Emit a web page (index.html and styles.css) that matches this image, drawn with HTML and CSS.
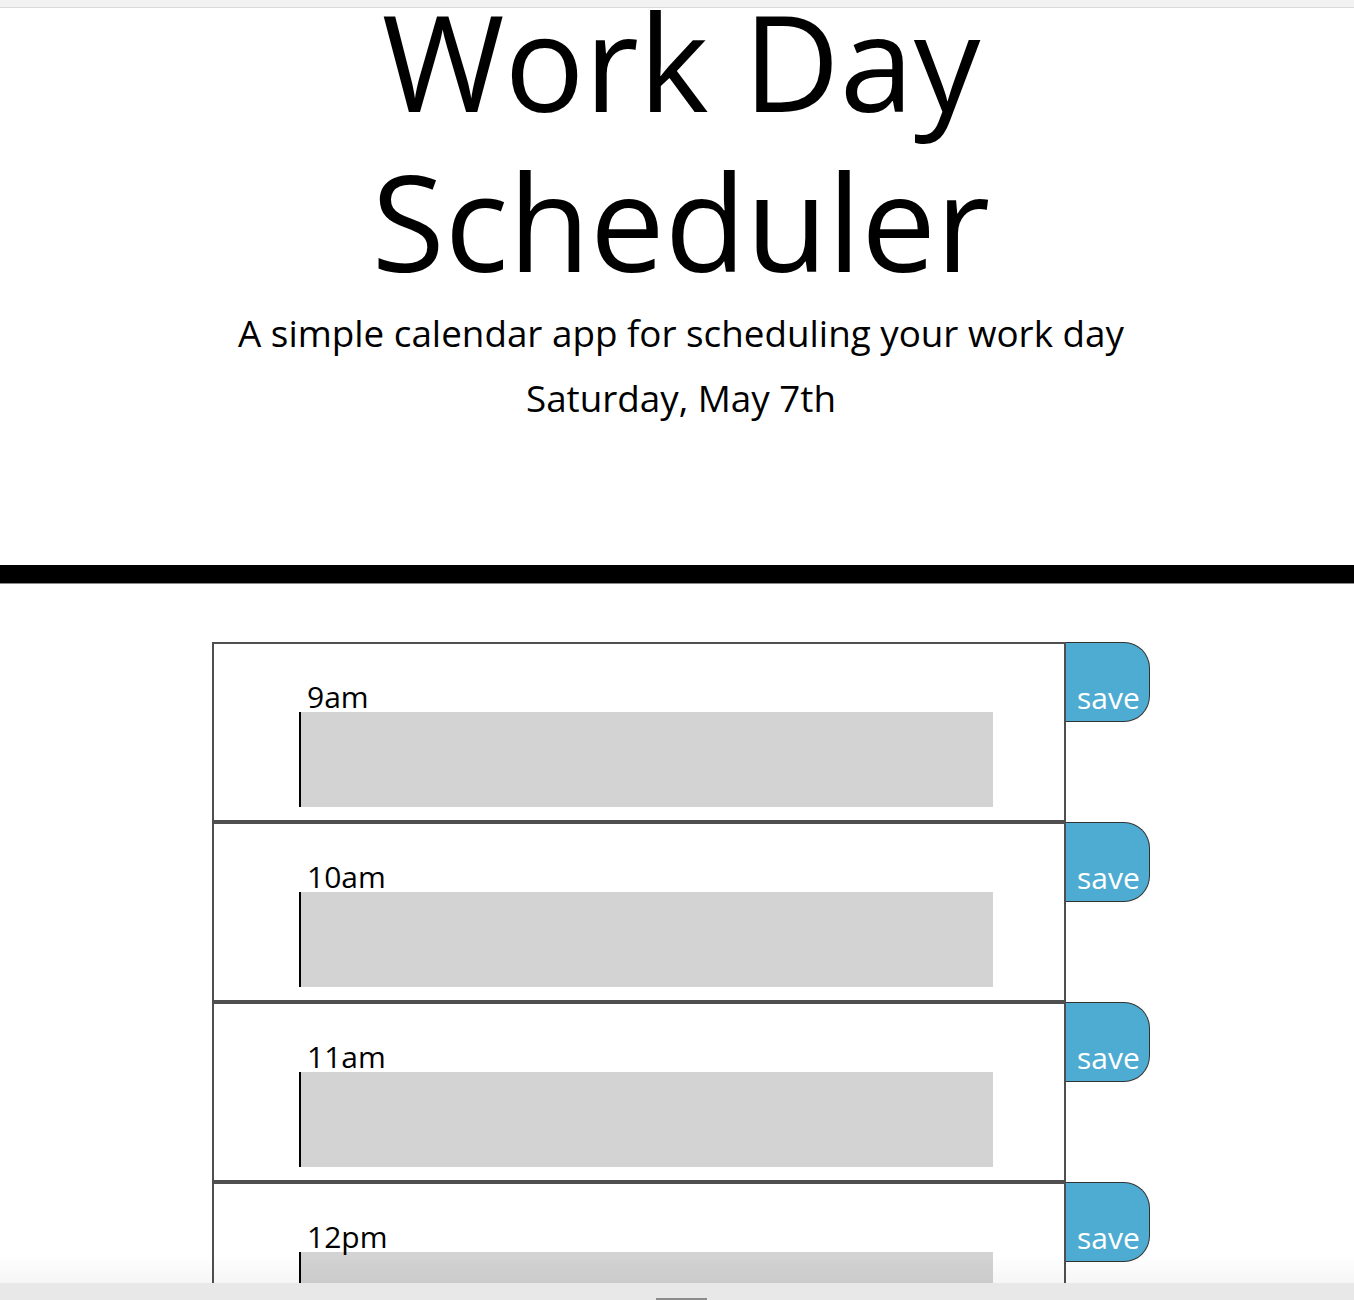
FILE: index.html
```html
<!DOCTYPE html>
<html lang="en">
<head>
<meta charset="utf-8">
<title>Work Day Scheduler</title>
<link rel="stylesheet" href="styles.css">
</head>
<body>
<div class="chrome-top"></div>
<header class="jumbotron">
  <h1 class="title">Work Day Scheduler</h1>
  <p class="lead">A simple calendar app for scheduling your work day</p>
  <p class="current-day">Saturday, May 7th</p>
</header>
<div class="planner-wrap">
  <main class="planner">
    <div class="time-row">
      <div class="hour-box">
        <div class="hour">9am</div>
        <textarea class="description"></textarea>
      </div>
      <button class="save-btn">save</button>
    </div>
    <div class="time-row">
      <div class="hour-box">
        <div class="hour">10am</div>
        <textarea class="description"></textarea>
      </div>
      <button class="save-btn">save</button>
    </div>
    <div class="time-row">
      <div class="hour-box">
        <div class="hour">11am</div>
        <textarea class="description"></textarea>
      </div>
      <button class="save-btn">save</button>
    </div>
    <div class="time-row">
      <div class="hour-box">
        <div class="hour">12pm</div>
        <textarea class="description"></textarea>
      </div>
      <button class="save-btn">save</button>
    </div>
    <div class="time-row">
      <div class="hour-box">
        <div class="hour">1pm</div>
        <textarea class="description"></textarea>
      </div>
      <button class="save-btn">save</button>
    </div>
    <div class="time-row">
      <div class="hour-box">
        <div class="hour">2pm</div>
        <textarea class="description"></textarea>
      </div>
      <button class="save-btn">save</button>
    </div>
    <div class="time-row">
      <div class="hour-box">
        <div class="hour">3pm</div>
        <textarea class="description"></textarea>
      </div>
      <button class="save-btn">save</button>
    </div>
    <div class="time-row">
      <div class="hour-box">
        <div class="hour">4pm</div>
        <textarea class="description"></textarea>
      </div>
      <button class="save-btn">save</button>
    </div>
    <div class="time-row">
      <div class="hour-box">
        <div class="hour">5pm</div>
        <textarea class="description"></textarea>
      </div>
      <button class="save-btn">save</button>
    </div>
  </main>
</div>
<div class="chrome-bottom">
  <div class="chrome-fade"></div>
  <div class="chrome-bar"><span class="chrome-handle"></span></div>
</div>
</body>
</html>
```

FILE: styles.css
```css
html, body {
  margin: 0;
  padding: 0;
  background: #ffffff;
}

body {
  font-family: "Open Sans", "Noto Sans", "DejaVu Sans", sans-serif;
  color: #000000;
}

.chrome-top {
  position: fixed;
  top: 0;
  left: 0;
  right: 0;
  height: 7px;
  background: #f1f2f1;
  border-bottom: 1px solid #d9dad9;
  z-index: 10;
}

.jumbotron {
  text-align: center;
  padding: 0 0 134px 8px;
  border-bottom: 18px solid #000000;
  box-shadow: 0 1px 0 #8a8a8a;
}

.title {
  max-width: 720px;
  margin: -19px auto 0;
  font-size: 133px;
  line-height: 160px;
  font-weight: 400;
}

.lead,
.current-day {
  margin: 0;
  font-size: 36.8px;
  line-height: 65px;
  font-weight: 400;
}

.planner-wrap {
  padding-left: 8px;
}

.planner {
  width: 938px;
  margin: 59px auto 0;
  padding-bottom: 60px;
}

.time-row {
  display: flex;
  align-items: flex-start;
}

.hour-box {
  width: 854px;
  box-sizing: border-box;
  border: 2px solid #4f4f4f;
  padding: 38px 71px 13px 85px;
}

.hour {
  font-size: 30px;
  line-height: 30px;
  height: 30px;
  padding-left: 8px;
}

.description {
  display: block;
  width: 694px;
  height: 95px;
  box-sizing: border-box;
  margin: 0;
  padding: 10px;
  border: none;
  border-left: 2px solid #000000;
  background: #d3d3d3;
  resize: none;
  font-family: inherit;
  font-size: 20px;
  outline: none;
}

.save-btn {
  width: 84px;
  height: 80px;
  box-sizing: border-box;
  display: flex;
  align-items: flex-end;
  justify-content: flex-start;
  padding: 0 0 8px 11px;
  margin: 0;
  background: #4eacd3;
  color: #ffffff;
  border: 1.5px solid #333333;
  border-left: none;
  border-radius: 0 26px 26px 0;
  font-family: inherit;
  font-size: 30px;
  line-height: 30px;
  cursor: pointer;
}

.chrome-bottom {
  position: fixed;
  left: 0;
  right: 0;
  bottom: 0;
  z-index: 10;
}

.chrome-fade {
  height: 28px;
  background: linear-gradient(to bottom, rgba(0, 0, 0, 0), rgba(0, 0, 0, 0.035));
}

.chrome-bar {
  height: 17px;
  background: #e8e8e9;
  position: relative;
}

.chrome-handle {
  position: absolute;
  left: 656px;
  bottom: 0;
  width: 51px;
  height: 2px;
  background: #8c8c8c;
}
```
